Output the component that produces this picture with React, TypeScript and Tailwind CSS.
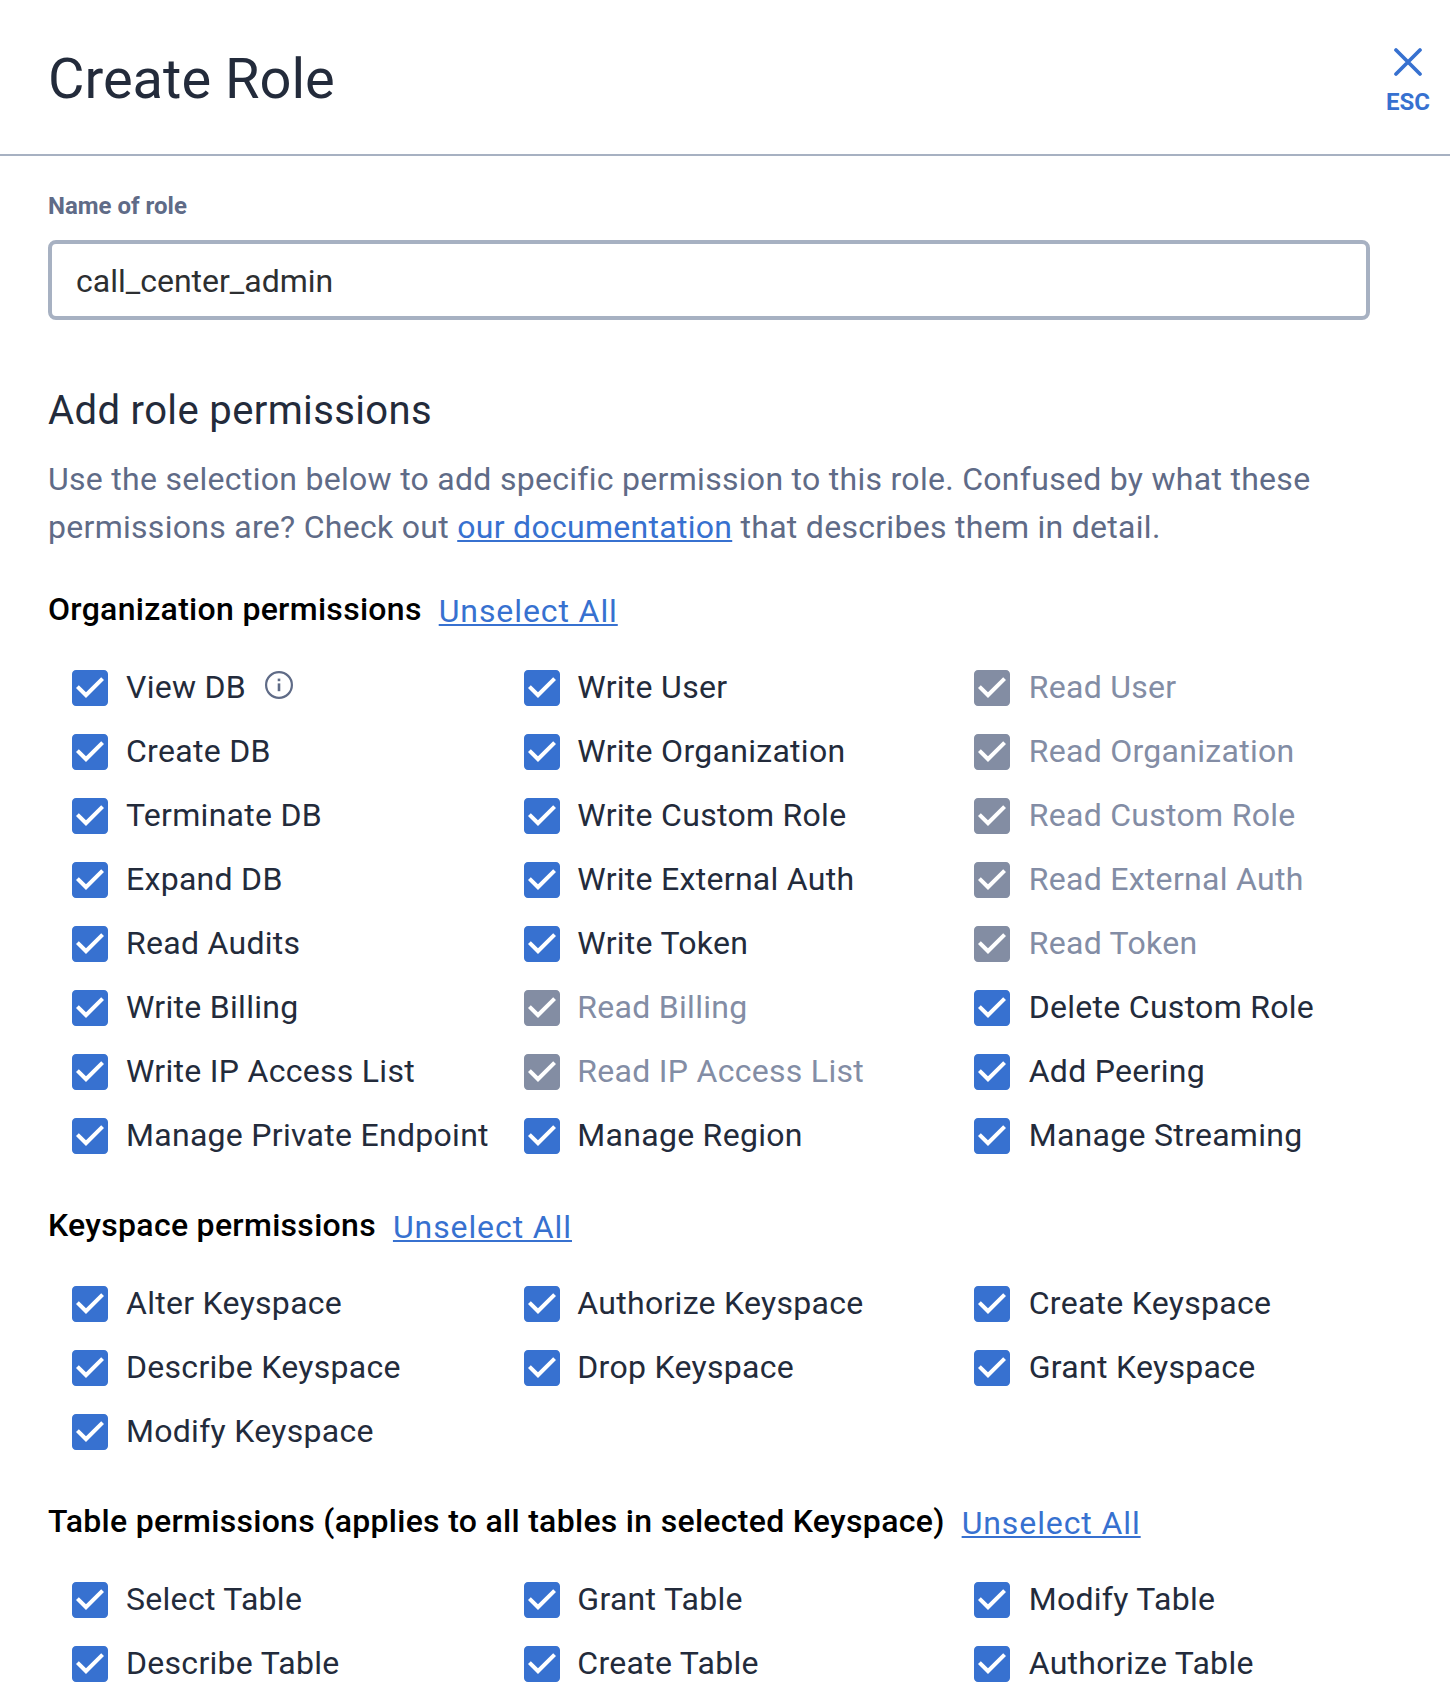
import React from "react";

type Permission = { label: string; disabled?: boolean; info?: boolean };

const organization: Permission[] = [
  { label: "View DB", info: true },
  { label: "Write User" },
  { label: "Read User", disabled: true },
  { label: "Create DB" },
  { label: "Write Organization" },
  { label: "Read Organization", disabled: true },
  { label: "Terminate DB" },
  { label: "Write Custom Role" },
  { label: "Read Custom Role", disabled: true },
  { label: "Expand DB" },
  { label: "Write External Auth" },
  { label: "Read External Auth", disabled: true },
  { label: "Read Audits" },
  { label: "Write Token" },
  { label: "Read Token", disabled: true },
  { label: "Write Billing" },
  { label: "Read Billing", disabled: true },
  { label: "Delete Custom Role" },
  { label: "Write IP Access List" },
  { label: "Read IP Access List", disabled: true },
  { label: "Add Peering" },
  { label: "Manage Private Endpoint" },
  { label: "Manage Region" },
  { label: "Manage Streaming" },
];

const keyspace: Permission[] = [
  { label: "Alter Keyspace" },
  { label: "Authorize Keyspace" },
  { label: "Create Keyspace" },
  { label: "Describe Keyspace" },
  { label: "Drop Keyspace" },
  { label: "Grant Keyspace" },
  { label: "Modify Keyspace" },
];

const table: Permission[] = [
  { label: "Select Table" },
  { label: "Grant Table" },
  { label: "Modify Table" },
  { label: "Describe Table" },
  { label: "Create Table" },
  { label: "Authorize Table" },
];

function InfoIcon() {
  return (
    <svg viewBox="0 0 28 28" className="mb-1 ml-[19px] size-7 shrink-0 text-[#5f6b87]" fill="none" stroke="currentColor">
      <circle cx="14" cy="14" r="12.9" strokeWidth="2.2" />
      <path d="M14 12.4v7.8" strokeWidth="2.6" />
      <path d="M14 7.6v2.6" strokeWidth="2.6" />
    </svg>
  );
}

function PermissionItem({ label, disabled, info }: Permission) {
  return (
    <label className="flex h-16 items-center whitespace-nowrap">
      <svg
        viewBox="3 3 18 18"
        className={disabled ? "mt-0.5 size-9 shrink-0 text-[#838da3]" : "mt-0.5 size-9 shrink-0 text-[#3771d0]"}
        fill="currentColor"
      >
        <path d="M19 3H5c-1.11 0-2 .9-2 2v14c0 1.1.89 2 2 2h14c1.11 0 2-.9 2-2V5c0-1.1-.89-2-2-2zm-9 14l-5-5 1.41-1.41L10 14.17l7.59-7.59L19 8l-9 9z" />
      </svg>
      <span
        className={
          disabled
            ? "ml-[18px] text-[32px] leading-12 tracking-[0.29px] text-[#838da5]"
            : "ml-[18px] text-[32px] leading-12 tracking-[0.29px] text-[#232b3b]"
        }
      >
        {label}
      </span>
      {info && <InfoIcon />}
    </label>
  );
}

function Section({ title, items }: { title: string; items: Permission[] }) {
  return (
    <section className="pb-[34px]">
      <div className="flex h-[70px] items-start gap-[17px]">
        <h3 className="text-[32px] leading-12 font-medium tracking-[0.3px] text-black">{title}</h3>
        <button className="mt-0.5 text-[32px] leading-12 tracking-[0.9px] text-[#3771d0] underline decoration-2 underline-offset-2">
          Unselect All
        </button>
      </div>
      <div className="ml-6 grid grid-cols-[452px_450px_auto] [&>*:nth-child(3n)>span]:ml-[18.7px] [&>*:nth-child(3n+2)>span]:ml-[17.3px]">
        {items.map((item) => (
          <PermissionItem key={item.label} {...item} />
        ))}
      </div>
    </section>
  );
}

export default function App() {
  return (
    <div className="h-[1702px] w-full overflow-hidden bg-white font-['Roboto',sans-serif]">
      <header className="flex h-[156px] items-start justify-between border-b-2 border-[#a7b1c2] pl-12">
        <h1 className="mt-[47px] text-[56px] leading-[64px] text-[#232b3b]">Create Role</h1>
        <button className="mt-12 mr-5 flex flex-col items-center text-[#3771d0]">
          <svg viewBox="0 0 28 28" className="size-7" fill="none" stroke="currentColor" strokeWidth="3.7" strokeLinecap="round">
            <path d="M2 2 26 26M26 2 2 26" />
          </svg>
          <span className="mt-3 text-[24px] leading-7 font-bold">ESC</span>
        </button>
      </header>
      <main className="px-12">
        <div className="mt-9 text-[24px] leading-7 font-bold text-[#5f6b87]">Name of role</div>
        <input
          className="mt-5 block h-20 w-[1322px] rounded-lg border-4 border-[#a7b1c2] bg-white pt-0.5 pl-6 text-[32px] text-[#2d2f31] outline-none"
          defaultValue="call_center_admin"
        />
        <h2 className="mt-[67px] text-[40px] leading-12 tracking-[0.37px] text-[#232b3b]">Add role permissions</h2>
        <p className="mt-5 w-[1322px] text-[32px] leading-12 tracking-[0.288px] text-[#5f6b87]">
          Use the selection below to add specific permission to this role. Confused by what these
          <br />
          permissions are? Check out{" "}
          <a className="text-[#3771d0] underline decoration-2 underline-offset-2">our documentation</a> that describes
          them in detail.
        </p>
        <div className="mt-[34px]">
          <Section title="Organization permissions" items={organization} />
          <Section title="Keyspace permissions" items={keyspace} />
          <Section title="Table permissions (applies to all tables in selected Keyspace)" items={table} />
        </div>
      </main>
    </div>
  );
}
